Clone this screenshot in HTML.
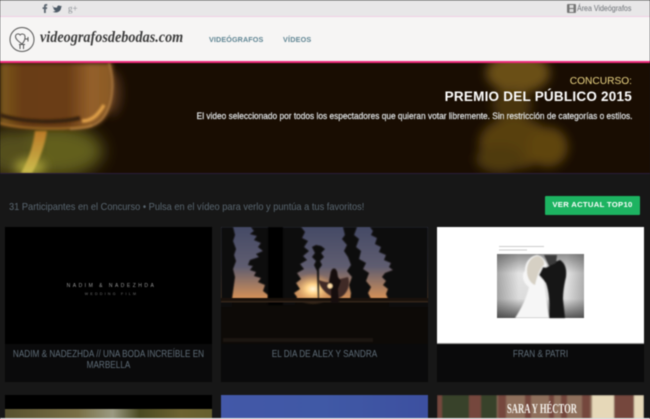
<!DOCTYPE html>
<html lang="es"><head><meta charset="utf-8"><title>Videógrafos de bodas</title>
<style>
*{box-sizing:border-box;margin:0;padding:0}
html,body{width:650px;height:419px;overflow:hidden;background:#171717}
body{position:relative;font-family:"Liberation Sans",sans-serif}
#wrap{position:absolute;inset:0;filter:blur(.4px)}
.a{position:absolute;white-space:nowrap}
.card{position:absolute;width:207px;height:155px;background:#0a0a0b}
.card .t{position:absolute;left:-50px;width:307px;top:122px;text-align:center;font-size:10.5px;line-height:11px;color:#5f6d78;white-space:nowrap;transform:scaleX(.78);transform-origin:50% 0}
svg{display:block}
</style></head><body><div id="wrap">
<div class="a" style="left:0;top:0;width:650px;height:17px;background:#e8e7e8;border-top:1px solid #c6c6c6;border-bottom:1px solid #f0cfe4"></div>
<svg class="a" style="left:41px;top:3px" width="40" height="11" viewBox="0 0 40 11"><path d="M3 10V6H1.600V4.300H3V3C3 1.600 3.900 1 5 1H6.200V2.800H5.400C4.900 2.800 4.800 3 4.800 3.500V4.300H6.200L6 6H4.800V10Z" fill="#5c6670"/><path d="M13 3.700C14.800 4.800 16.500 4.900 18 4.900C17.700 3 20 1.900 21.300 3.300L22.800 2.800L22 4L23.300 3.700L22.200 4.800C22.300 8 19.500 10 16.800 10C15.400 10 14.200 9.600 13.200 9C14.500 9.100 15.700 8.700 16.500 8C15.500 8 14.700 7.400 14.400 6.500H15.400C14.300 6.100 13.700 5.300 13.700 4.300L14.600 4.600C13.800 4 13.500 3.300 13.500 2.800Z" fill="#4d5a66" transform="translate(-1 0) scale(.95)"/><text x="27" y="8.500" font-family="Liberation Serif" font-size="9" fill="#8a8f94">g+</text></svg>
<svg class="a" style="left:567px;top:4px" width="9" height="9" viewBox="0 0 9 9"><rect width="9" height="9" rx="1" fill="#777"/><rect x="2.500" y="1" width="4" height="3" fill="#ddd"/><rect x="2.500" y="5" width="4" height="3" fill="#ddd"/></svg>
<div class="a" style="left:577px;top:3px;font-size:8.500px;line-height:11px;color:#6a6f74;transform:scaleX(.83);transform-origin:0 0">Área Videógrafos</div>
<div class="a" style="left:0;top:17px;width:650px;height:44px;background:#f6f5f4"></div>
<div class="a" style="left:0;top:61px;width:650px;height:2px;background:#ee2a7b"></div>
<svg class="a" style="left:9px;top:26px" width="26" height="27" viewBox="0 0 26 27" fill="none" stroke="#555" stroke-width="1"><circle cx="13" cy="13.500" r="12"/><path d="M13 18C9 15 6.500 13 6.500 10.500C6.500 8 9.500 7 11.200 9C12 7.500 15.800 7.500 16 10.500C16.200 13 15 16 13 18Z"/><path d="M16 13H19M19 11V15.500M10 18.500H16M11 19V23M14.500 19V23"/></svg>
<div class="a" style="left:40px;top:27px;font:italic bold 16px/22px 'Liberation Serif',serif;color:#3d3d3d;transform:scaleX(.888);transform-origin:0 0">videografosdebodas.com</div>
<div class="a" style="left:209px;top:34px;font-size:7.200px;font-weight:700;line-height:11px;letter-spacing:.12px;color:#5f8593">VIDEÓGRAFOS</div>
<div class="a" style="left:283px;top:34px;font-size:7.200px;font-weight:700;line-height:11px;letter-spacing:.2px;color:#5f8593">VÍDEOS</div>

<svg class="a" style="left:0;top:63px" width="650" height="110" viewBox="0 0 650 110">
<defs>
<filter id="b1" x="-50%" y="-50%" width="200%" height="200%"><feGaussianBlur stdDeviation="2.500"/></filter>
<filter id="b2" x="-50%" y="-50%" width="200%" height="200%"><feGaussianBlur stdDeviation="8"/></filter>
<filter id="b4" x="-50%" y="-50%" width="200%" height="200%"><feGaussianBlur stdDeviation="5"/></filter>
<filter id="b3" x="-50%" y="-50%" width="200%" height="200%"><feGaussianBlur stdDeviation="1"/></filter>
<linearGradient id="g" x1="0" x2="1" y1="0" y2="0"><stop offset="0" stop-color="#7c5a1c"/><stop offset=".2" stop-color="#693c16"/><stop offset=".6" stop-color="#6a3d17"/><stop offset=".8" stop-color="#94602a"/><stop offset="1" stop-color="#8a5a26"/></linearGradient>
<linearGradient id="st" x1="0" x2="0" y1="0" y2="1"><stop offset="0" stop-color="#c8802a"/><stop offset="1" stop-color="#cfc050"/></linearGradient>
</defs>
<rect width="650" height="110" fill="#190d02"/>
<g filter="url(#b2)">
<ellipse cx="55" cy="88" rx="48" ry="26" fill="#625e1d"/>
<ellipse cx="10" cy="90" rx="26" ry="24" fill="#54501a"/>
</g>
<ellipse cx="30" cy="104" rx="16" ry="8" fill="#a8a038" filter="url(#b4)"/>
<ellipse cx="112" cy="30" rx="9" ry="22" fill="#54361a" filter="url(#b4)"/>
<g filter="url(#b4)">
<ellipse cx="518" cy="10" rx="32" ry="20" fill="#6a4f15"/>
<ellipse cx="512" cy="42" rx="20" ry="16" fill="#4a360d"/>
<ellipse cx="515" cy="80" rx="36" ry="26" fill="#59400f"/>
<ellipse cx="548" cy="84" rx="20" ry="20" fill="#5f4510"/>
<ellipse cx="500" cy="96" rx="24" ry="14" fill="#4f3a0e"/>
</g>
<path d="M0 0H112C114 20 114 38 108 50C102 62 90 66 70 66C40 66 20 66 0 62Z" fill="url(#g)" filter="url(#b1)"/>
<path d="M0 52C25 60 60 60 80 55" fill="none" stroke="#38200a" stroke-width="4" filter="url(#b3)"/>
<path d="M82 58C92 58 98 52 104 42" fill="none" stroke="#e0a048" stroke-width="3.500" filter="url(#b3)"/>
<path d="M0 60C25 67 70 67 92 62" fill="none" stroke="#a06a28" stroke-width="2" filter="url(#b3)"/>
<path d="M109 0C115 20 113 42 102 56C94 64 85 65 70 66" fill="none" stroke="#c08a4c" stroke-width="1.300" filter="url(#b3)"/>
<path d="M35 68H47C45 82 40 96 32 110H21C28 98 33 84 35 68Z" fill="url(#st)" filter="url(#b3)" opacity=".9"/>
</svg>
<div class="a" style="right:18px;top:75px;font-size:10.200px;line-height:13px;color:#ecd684">CONCURSO:</div>
<div class="a" style="right:18px;top:88px;font-size:13.500px;font-weight:700;line-height:17px;letter-spacing:.23px;color:#fff">PREMIO DEL PÚBLICO 2015</div>
<div class="a" style="right:18px;top:111px;font-size:9.500px;line-height:12px;color:#e4e8ea;transform:scaleX(.876);transform-origin:100% 0;-webkit-text-stroke:.2px #e4e8ea">El video seleccionado por todos los espectadores que quieran votar libremente. Sin restricción de categorías o estilos.</div>
<div class="a" style="left:0;top:173px;width:650px;height:1px;background:#2b1f3a"></div>

<div class="a" style="left:9px;top:200px;font-size:10.500px;line-height:14px;color:#5a6771;transform:scaleX(.882);transform-origin:0 0">31 Participantes en el Concurso • Pulsa en el vídeo para verlo y puntúa a tus favoritos!</div>
<div class="a" style="left:545px;top:196px;width:95px;height:19px;background:#1db361;border-radius:1px;color:#fff;font-size:7.700px;font-weight:700;line-height:18px;text-align:center;letter-spacing:.3px">VER ACTUAL TOP10</div>

<div class="card" style="left:5px;top:227px"><div style="position:absolute;left:0;top:0;width:207px;height:117px;background:#000"></div>
<div class="a" style="left:3px;width:207px;top:56px;text-align:center;font-size:5px;line-height:6px;letter-spacing:2.500px;color:#999">NADIM &amp; NADEZHDA</div>
<div class="a" style="left:3px;width:207px;top:65px;text-align:center;font-size:3.500px;line-height:5px;letter-spacing:2.300px;color:#777">WEDDING FILM</div>
<div class="t">NADIM &amp; NADEZHDA // UNA BODA INCREÍBLE EN<br>MARBELLA</div></div>

<div class="card" style="left:221px;top:227px">
<svg style="position:absolute;left:0;top:0" width="207" height="117" viewBox="0 0 207 117">
<defs><linearGradient id="sky" x1="0" x2="0" y1="0" y2="1"><stop offset="0" stop-color="#454a66"/><stop offset=".55" stop-color="#5f5d70"/><stop offset=".8" stop-color="#a17a62"/><stop offset="1" stop-color="#d69258"/></linearGradient>
<radialGradient id="sun"><stop offset="0" stop-color="#fff6d8"/><stop offset=".3" stop-color="#ffd38a"/><stop offset="1" stop-color="#d99556" stop-opacity="0"/></radialGradient>
<filter id="s" x="-20%" y="-20%" width="140%" height="140%"><feGaussianBlur stdDeviation=".6"/></filter></defs>
<rect width="207" height="117" fill="#0d0a07"/>
<rect x="0" y="0" width="207" height="72" fill="url(#sky)"/>
<ellipse cx="92" cy="62" rx="22" ry="16" fill="url(#sun)"/>
<g fill="#0a0807" filter="url(#s)">
<path d="M30 0L33 4L29 7L36 9L33 13L40 16L37 20L42 24L35 27L38 30L29 33L27 38L32 39L29 43L35 45L33 49L40 51L37 55L44 58L42 64L47 68L46 78L74 78L76 70L73 66L79 62L75 56L80 52L76 46L83 42L79 37L86 33L82 29L88 24L83 20L87 14L81 11L84 5L80 0Z"/>
<path d="M91 20L95 18L100 19L104 22L100 26L103 30L99 34L101 38L98 42L98 72H97L96 44L93 38L95 34L91 30L94 26Z"/>
<path d="M122 0L124 8L121 12L126 18L123 24L127 30L130 38L126 44L131 50L128 58L130 66L129 74H151L147 66L150 60L145 54L148 46L142 42L145 36L138 32L140 24L135 20L138 12L133 8L136 0Z"/>
<path d="M149 0L152 4L150 8L156 11L154 17L160 20L158 25L165 28L163 33L170 36L168 40L172 43L164 46L161 50L165 54L162 58L167 62L165 67L168 74V80H207V0Z"/>
<path d="M0 0H12L14 8L12 14L15 22L13 28L15 34L12 42L14 50L11 72V80H0Z"/>
</g>
<rect x="47" y="0" width="15" height="78" fill="#060505" filter="url(#s)"/>
<rect x="0" y="71" width="207" height="3" fill="#1a110b"/>
<rect x="0" y="74" width="207" height="1.500" fill="#33251a"/>
<g filter="url(#s)"><path d="M97 53C100 53 104 56 109 55L119 52L127 50C130 58 126 68 118 71C110 71 100 64 97 53Z" fill="#3f2c27"/><path d="M110 44H116L117 50L120 54L117 62L118 76H110L110 60L108 54Z" fill="#130c0a"/><circle cx="113" cy="44" r="2.500" fill="#130c0a"/><circle cx="109" cy="59" r="2.500" fill="#ffdca6"/></g>
<rect y="111" x="2" width="150" height="4" fill="#241c12" opacity=".7" filter="url(#s)"/>
</svg>
<div class="t">EL DIA DE ALEX Y SANDRA</div></div>

<div class="card" style="left:437px;top:227px"><div style="position:absolute;left:0;top:0;width:207px;height:117px;background:#fff;border-bottom:1px solid #999"></div>
<svg style="position:absolute;left:0;top:0" width="207" height="117" viewBox="0 0 207 117">
<defs><linearGradient id="bw" x1="0" x2="0" y1="0" y2="1"><stop offset="0" stop-color="#8e8e8e"/><stop offset=".3" stop-color="#e4e4e4"/><stop offset=".7" stop-color="#dcdcdc"/><stop offset="1" stop-color="#5a5a5a"/></linearGradient>
<linearGradient id="bx" x1="0" x2="1" y1="0" y2="0"><stop offset="0" stop-color="#333" stop-opacity=".35"/><stop offset=".25" stop-color="#333" stop-opacity="0"/><stop offset=".8" stop-color="#333" stop-opacity="0"/><stop offset="1" stop-color="#333" stop-opacity=".3"/></linearGradient>
<filter id="p" x="-10%" y="-10%" width="120%" height="120%"><feGaussianBlur stdDeviation=".6"/></filter></defs>
<rect x="62" y="19" width="45" height="1" fill="#ccc"/><rect x="62" y="22.500" width="28" height="1" fill="#ccc"/>
<rect x="60" y="27" width="87" height="64" fill="url(#bw)"/><rect x="60" y="27" width="87" height="64" fill="url(#bx)"/>
<g filter="url(#p)">
<path d="M78 91C84 82 90 70 92 60C86 56 84 48 88 44C88 34 94 29 100 28C106 29 108 34 110 38L106 50L108 62L112 91Z" fill="#f6f6f6"/>
<path d="M90 44C90 34 96 29 101 29C106 30 108 36 107 38C102 42 100 50 98 58C93 56 90 50 90 44Z" fill="#d6d0c4"/>
<path d="M106 40C110 41 112 40 115 36L123 33C128 36 130 42 129 50C127 58 126 66 126 72L128 91H112C113 76 112 64 109 56L102 48Z" fill="#161616"/>
<path d="M107 28H120L119 36L112 39Z" fill="#3a3a3a"/>
</g>
</svg>
<div class="t">FRAN &amp; PATRI</div></div>

<div class="a" style="left:5px;top:395px;width:207px;height:24px;background:#000"><div style="position:absolute;left:0;top:14px;width:207px;height:10px;background:linear-gradient(90deg,#57512f,#796f45 35%,#9b9a82 52%,#4a4a22 65%,#6d6331 85%,#66602f)"></div></div>
<div class="a" style="left:221px;top:395px;width:207px;height:24px;background:linear-gradient(90deg,#4358a8,#4059a6 50%,#3d50a0)"></div>
<svg class="a" style="left:437px;top:395px" width="207" height="24" viewBox="0 0 207 24">
<defs><filter id="w" x="-5%" y="-5%" width="110%" height="110%"><feGaussianBlur stdDeviation=".7"/></filter></defs>
<g filter="url(#w)">
<rect width="207" height="24" fill="#e6d8b8"/>
<rect x="0" y="0" width="60" height="24" fill="#39422a"/>
<rect x="60" y="0" width="95" height="24" fill="#8f6f5c"/>
<g fill="#74473d"><rect x="0" y="0" width="5" height="24"/><rect x="32" y="0" width="12" height="24"/><rect x="61" y="0" width="8" height="24"/><rect x="88" y="0" width="6" height="24"/><rect x="112" y="0" width="5" height="24"/><rect x="124" y="0" width="6" height="24"/><rect x="145" y="0" width="8" height="24"/><rect x="177" y="0" width="20" height="24"/></g>
</g>
<text x="70" y="18" font-family="Liberation Serif,serif" font-weight="700" font-size="14" textLength="70" lengthAdjust="spacingAndGlyphs" fill="#f6f3ee">SARA Y HÉCTOR</text></svg>
<div class="a" style="left:0;top:417.500px;width:650px;height:2px;background:#dde0e2"></div>
</div></body></html>
